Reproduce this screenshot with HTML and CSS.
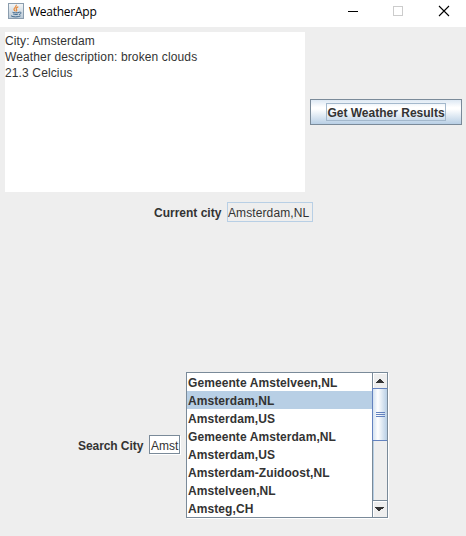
FILE: index.html
```html
<!DOCTYPE html>
<html lang="en">
<head>
<meta charset="utf-8">
<title>WeatherApp</title>
<link rel="stylesheet" href="styles.css">
</head>
<body>
<header class="titlebar">
  <svg class="logo" width="16" height="16" viewBox="0 0 16 16">
    <defs><linearGradient id="g" x1="0" y1="0" x2="0" y2="1"><stop offset="0" stop-color="#f5f7f8"/><stop offset="1" stop-color="#b8c8d6"/></linearGradient></defs>
    <rect x=".5" y=".5" width="15" height="15" fill="url(#g)" stroke="#8b9dae"/>
    <path d="M8.2 1.8C9 4 5.3 5 6 6.600C6.200 7.300 7 7.800 7.400 8.400M10.300 3.800C8 4.800 7.600 5.600 8.600 6.600C9 7.200 8.700 7.800 8.200 8.300" fill="none" stroke="#e8822c" stroke-width="1.100"/>
    <path d="M4.500 9.300C6 10 9 10 11 9.300M5.200 11C7 11.700 9 11.600 10.200 11M3 12.800C5 14.300 10 14.200 12.500 12.900M11 9.300C14 8.500 13.500 11 11 11.500" fill="none" stroke="#42698d" stroke-width="1"/>
  </svg>
  <h1>WeatherApp</h1>
  <svg class="controls" width="106" height="16" viewBox="0 0 106 16" shape-rendering="crispEdges">
    <path d="M0 8.500H10" stroke="#000"/>
    <rect x="45.500" y="3.500" width="9" height="9" fill="none" stroke="#ccc"/>
    <path d="M91 3L101 13M101 3L91 13" stroke="#000" stroke-width="1.100" shape-rendering="auto"/>
  </svg>
</header>
<main>
  <section class="results">
    <div class="report"><p>City: Amsterdam</p><p>Weather description: broken clouds</p><p>21.3 Celcius</p></div>
    <button class="get"><span>Get Weather Results</span></button>
  </section>
  <section class="current">
    <label>Current city</label><div class="readonly">Amsterdam,NL</div>
  </section>
  <section class="search">
    <label>Search City</label><div class="query">Amst</div>
    <div class="listbox">
      <ul>
        <li>Gemeente Amstelveen,NL</li>
        <li class="selected">Amsterdam,NL</li>
        <li>Amsterdam,US</li>
        <li>Gemeente Amsterdam,NL</li>
        <li>Amsterdam,US</li>
        <li>Amsterdam-Zuidoost,NL</li>
        <li>Amstelveen,NL</li>
        <li>Amsteg,CH</li>
      </ul>
      <div class="scrollbar">
        <div class="arrow up"><svg width="8" height="4" viewBox="0 0 8 4" shape-rendering="crispEdges"><path d="M3 0H5V1H6V2H7V3H8V4H0V3H1V2H2V1H3Z" fill="#333"/></svg></div>
        <div class="thumb"><i></i><i></i><i></i></div>
        <div class="track"></div>
        <div class="arrow down"><svg width="9" height="4" viewBox="0 0 9 4" shape-rendering="crispEdges"><path d="M0 0H9V1H8V2H6V3H5V4H3V3H2V2H1V1H0Z" fill="#333"/></svg></div>
      </div>
    </div>
  </section>
</main>
</body>
</html>
```
FILE: styles.css
```css
* { box-sizing: border-box; }
body {
  margin: 0;
  width: 466px;
  height: 536px;
  overflow: hidden;
  background: #eee;
  color: #333;
  font: 12px/16px "Liberation Sans", Arial, sans-serif;
}
.titlebar {
  display: flex;
  align-items: flex-start;
  height: 27px;
  padding: 3px 12px 0 8px;
  background: #fff;
}
h1 {
  margin: 1px auto 0 5px;
  color: #000;
  font: 12px/16px "Open Sans", sans-serif;
  letter-spacing: -0.25px;
}
p, ul { margin: 0; padding: 0; }
.results {
  display: flex;
  align-items: center;
  gap: 5px;
  padding: 5px 4px 0 5px;
}
.report {
  width: 300px;
  height: 160px;
  padding-top: 1px;
  background: #fff;
  letter-spacing: 0.13px;
}
.get {
  display: flex;
  align-items: center;
  justify-content: center;
  width: 152px;
  height: 26px;
  padding: 0;
  border: 1px solid #7a8a99;
  border-radius: 0;
  background: linear-gradient(#dde8f3 0, #fff 30%, #fff 38%, #b8cfe5 100%);
  color: #333;
  font: bold 12px/18px "Liberation Sans", Arial, sans-serif;
}
.get span {
  width: 120px;
  height: 18px;
  border: 1px solid #a3b8cc;
  white-space: nowrap;
}
label { font-weight: bold; white-space: nowrap; letter-spacing: -0.07px; }
.current {
  display: flex;
  align-items: center;
  height: 20px;
  margin: 10px 0 0 154px;
}
.current label { width: 73px; padding-top: 1px; letter-spacing: 0; }
.readonly {
  width: 86px;
  height: 20px;
  padding-top: 2px;
  border: 1px solid #b8cfe5;
  letter-spacing: 0.1px;
}
.search {
  display: flex;
  align-items: center;
  height: 146px;
  margin: 150px 0 0 78px;
}
.search label { width: 71px; padding-top: 1px; }
.query {
  width: 31px;
  height: 19px;
  margin-bottom: 1px;
  padding: 2px 0 0 1px;
  border: 1px solid #7a8a99;
  background: #fff;
  box-shadow: 1px 1px #fff;
}
.listbox {
  display: flex;
  width: 202px;
  height: 146px;
  margin-left: 6px;
  border: 1px solid #7a8a99;
  background: #fff;
  box-shadow: 1px 1px #fff;
}
ul {
  flex: 1;
  list-style: none;
  font-weight: bold;
  letter-spacing: 0.08px;
}
li {
  height: 18px;
  padding: 2px 0 0 1px;
  white-space: nowrap;
}
.selected { background: #b8cfe5; }
.scrollbar {
  display: flex;
  flex-direction: column;
  width: 15px;
  border-left: 1px solid #7a8a99;
  background: #eee;
}
.arrow {
  display: flex;
  align-items: center;
  justify-content: center;
  height: 15px;
  padding: 0 2px 0 0;
  border-top: 1px solid #fff;
  border-left: 1px solid #fff;
}
.thumb {
  display: flex;
  flex-direction: column;
  align-items: center;
  justify-content: center;
  gap: 1px;
  height: 53px;
  margin-left: -1px;
  border: 1px solid #6382bf;
  border-right: 0;
  background: linear-gradient(90deg, #d4e2f0, #fff 35%, #b8cfe5);
}
.thumb i { width: 9px; height: 1px; background: #6382bf; }
.track { flex: 1; border-left: 1px solid #b8cfe5; }
.down { height: 16px; border-top: 0; box-shadow: 0 -1px #7a8a99, inset 0 1px #fff; }
```
